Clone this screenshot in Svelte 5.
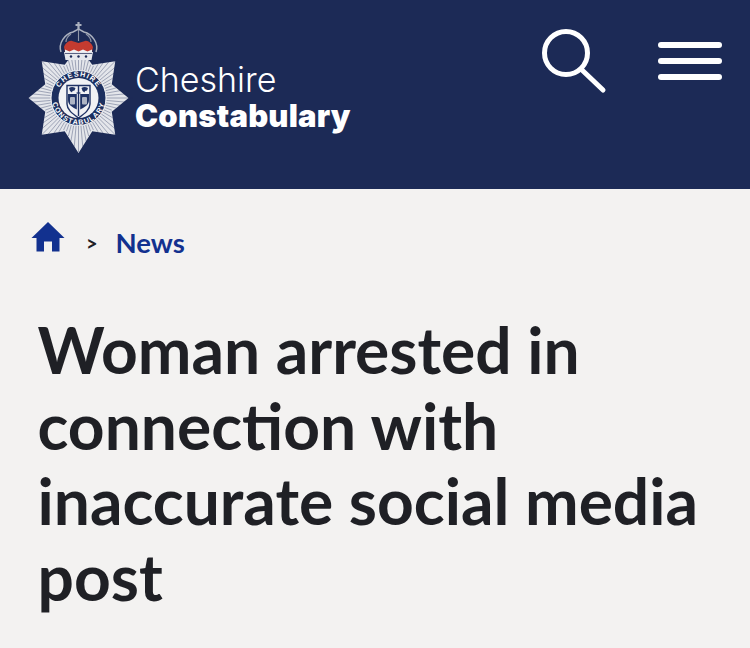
<script>
  const cx = 78.500, cy = 98;
  const rays = [];
  const n = 72;
  for (let i = 0; i < n; i++) {
    const a = (i / n) * Math.PI * 2;
    const sector = ((a / (Math.PI / 4)) % 1 + 1) % 1;
    const d = Math.abs(sector - 0.5) * 2;
    const len = 34 + 20 * Math.pow(d, 1.2);
    rays.push({
      x1: cx + Math.sin(a) * 28,
      y1: cy - Math.cos(a) * 28,
      x2: cx + Math.sin(a) * len,
      y2: cy - Math.cos(a) * len
    });
  }
  const starPts = [];
  for (let i = 0; i < 16; i++) {
    const a = (i / 16) * Math.PI * 2;
    const r = i % 2 === 0 ? (i === 8 ? 55 : i === 4 || i === 12 ? 50 : 52) : 36;
    starPts.push(`${cx + Math.sin(a) * r},${cy - Math.cos(a) * r}`);
  }
  const star = starPts.join(' ');
</script>

<div class="page">
  <header class="masthead">
    <div class="brand">
      <svg class="crest" width="110" height="140" viewBox="23 20 110 140" aria-hidden="true">
        <polygon points={star} fill="#e4e6eb" />
        {#each rays as r}
          <line x1={r.x1} y1={r.y1} x2={r.x2} y2={r.y2} stroke="#1c2a56" stroke-width="0.7" opacity="0.5" />
        {/each}
        <!-- crown -->
        <path d="M61 53c-3-9 4-18 12-20l5.500-3 5.500 3c8 2 15 11 12 20z" fill="#1c2a56" />
        <path d="M61 52c-3-9 4-18 12-20l5.500-3 5.500 3c8 2 15 11 12 20" fill="none" stroke="#aab0be" stroke-width="1.500" />
        <path d="M78.500 30v11M71 34c-3 2-5 5-5 8M86 34c3 2 5 5 5 8" fill="none" stroke="#8f96a8" stroke-width="1.100" />
        <path d="M64 47c1-3 5-7 8-6l6.500 2 6.500-2c3-1 7 3 8 6l-1 5H65z" fill="#c43b30" />
        <path d="M65 52h27v-2.500l-4.500 2-4.500-2-4.500 2-4.500-2-4.500 2-4.500-2z" fill="#f2f3f5" />
        <path d="M64 52h29l-1.500 8h-26z" fill="#e6e8ec" />
        <path d="M65 53.500h27" stroke="#1c2a56" stroke-width="0.700" />
        <circle cx="71" cy="56.500" r="1.200" fill="#1c2a56" />
        <circle cx="78.500" cy="56.500" r="1.200" fill="#1c2a56" />
        <circle cx="86" cy="56.500" r="1.200" fill="#1c2a56" />
        <path d="M78.500 22v8M75.500 25h6" stroke="#aab0be" stroke-width="2.200" />
        <!-- badge -->
        <circle cx={cx} cy={cy} r="27.500" fill="#1c2f5f" stroke="#eef0f3" stroke-width="1" />
        <circle cx={cx} cy={cy} r="20" fill="#f1f2f4" />
        <path id="arcTop" d="M{cx - 21.500} {cy}a21.500 21.500 0 0 1 43 0" fill="none" />
        <path id="arcBot" d="M{cx - 26.500} {cy}a26.500 26.500 0 0 0 53 0" fill="none" />
        <text class="ring"><textPath href="#arcTop" startOffset="50%" text-anchor="middle">CHESHIRE</textPath></text>
        <text class="ring"><textPath href="#arcBot" startOffset="50%" text-anchor="middle">CONSTABULARY</textPath></text>
        <!-- shield -->
        <path d="M67 85.500h23v18.500c0 6-6 10-11.500 14-5.500-4-11.500-8-11.500-14z" fill="#f1f2f4" stroke="#1f3264" stroke-width="1.400" />
        <path d="M68 94h8.800v15.500c-3.500-2-8.800-4-8.800-9.500zM80.200 94H89v6c0 5.500-5.300 7.500-8.800 9.500z" fill="#1f3264" />
        <path d="M69 88c2-1.500 4-1.500 6.500 0l-1 2.500-2 .5-.5 1.500-2-1.500z" fill="#1f3264" />
        <path d="M81.500 88c2-1.500 4-1.500 6.500 0l-1 2.500-2 .5-.5 1.500-2-1.500z" fill="#1f3264" />
        <rect x="70" y="97" width="5" height="7.500" rx="1" fill="#aeb5c4" />
        <rect x="82" y="97" width="5" height="7.500" rx="1" fill="#aeb5c4" />
        <path d="M78.500 86v30" stroke="#1f3264" stroke-width="1.400" />
        <path d="M76.500 93h4" stroke="#1f3264" stroke-width="1.200" />
      </svg>
      <div class="wordmark">
        <span class="w1">Cheshire</span>
        <span class="w2">Constabulary</span>
      </div>
    </div>
    <div class="tools">
      <svg width="70" height="70" viewBox="0 0 70 70" aria-hidden="true">
        <circle cx="28" cy="26" r="21.500" fill="none" stroke="#fff" stroke-width="5" />
        <path d="M44 43l21 20" stroke="#fff" stroke-width="5" stroke-linecap="round" />
      </svg>
      <div class="burger"><i></i><i></i><i></i></div>
    </div>
  </header>

  <main class="content">
    <nav class="crumbs">
      <svg width="34" height="30" viewBox="0 0 34 30" aria-hidden="true">
        <path d="M17 0 33.500 16H28.500V29.500H21V19.500H13V29.500H5.500V16H.5z" fill="#12318f" />
      </svg>
      <span class="sep">&gt;</span>
      <span class="link">News</span>
    </nav>
    <h1>Woman arrested in connection with inaccurate social media post</h1>
  </main>
</div>

<style>
  :global(body) {
    margin: 0;
    background: #f3f2f1;
  }
  .page {
    width: 750px;
    height: 648px;
    overflow: hidden;
    background: #f3f2f1;
  }
  .masthead {
    height: 189px;
    background: #1c2a56;
    display: flex;
    justify-content: space-between;
    box-sizing: border-box;
    padding: 20px 28px 0 23px;
  }
  .brand {
    display: flex;
    align-items: flex-start;
  }
  .crest {
    display: block;
    flex: none;
  }
  .ring {
    font: 700 7.200px "Liberation Sans", sans-serif;
    letter-spacing: 1.100px;
    fill: #fff;
  }
  .wordmark {
    display: flex;
    flex-direction: column;
    margin: 42px 0 0 2px;
    color: #fff;
    font-family: Inter, sans-serif;
    line-height: 36px;
  }
  .w1 {
    font-size: 34px;
    font-weight: 300;
  }
  .w2 {
    font-size: 31px;
    font-weight: 900;
    letter-spacing: 0.200px;
  }
  .tools {
    display: flex;
    align-items: flex-start;
    gap: 50px;
    padding-top: 7px;
  }
  .tools svg {
    display: block;
  }
  .burger {
    display: flex;
    flex-direction: column;
    gap: 10px;
    width: 64px;
    margin-top: 15px;
  }
  .burger i {
    display: block;
    height: 6px;
    border-radius: 3px;
    background: #fff;
  }
  .content {
    padding: 33px 38px 0;
  }
  .crumbs {
    display: flex;
    align-items: flex-start;
    margin-left: -7px;
    height: 30px;
  }
  .crumbs svg {
    display: block;
    flex: none;
  }
  .sep {
    margin: 9px 0 0 21px;
    font: 700 20px/24px Lato, sans-serif;
    color: #1f2025;
  }
  .link {
    margin: 4px 0 0 18px;
    font: 700 27.500px/33px Lato, sans-serif;
    color: #12318f;
  }
  h1 {
    margin: 60px 0 0 -0.500px;
    font: 700 64.100px/75.500px Lato, sans-serif;
    color: #1f2025;
    font-variant-ligatures: common-ligatures;
  }
</style>
